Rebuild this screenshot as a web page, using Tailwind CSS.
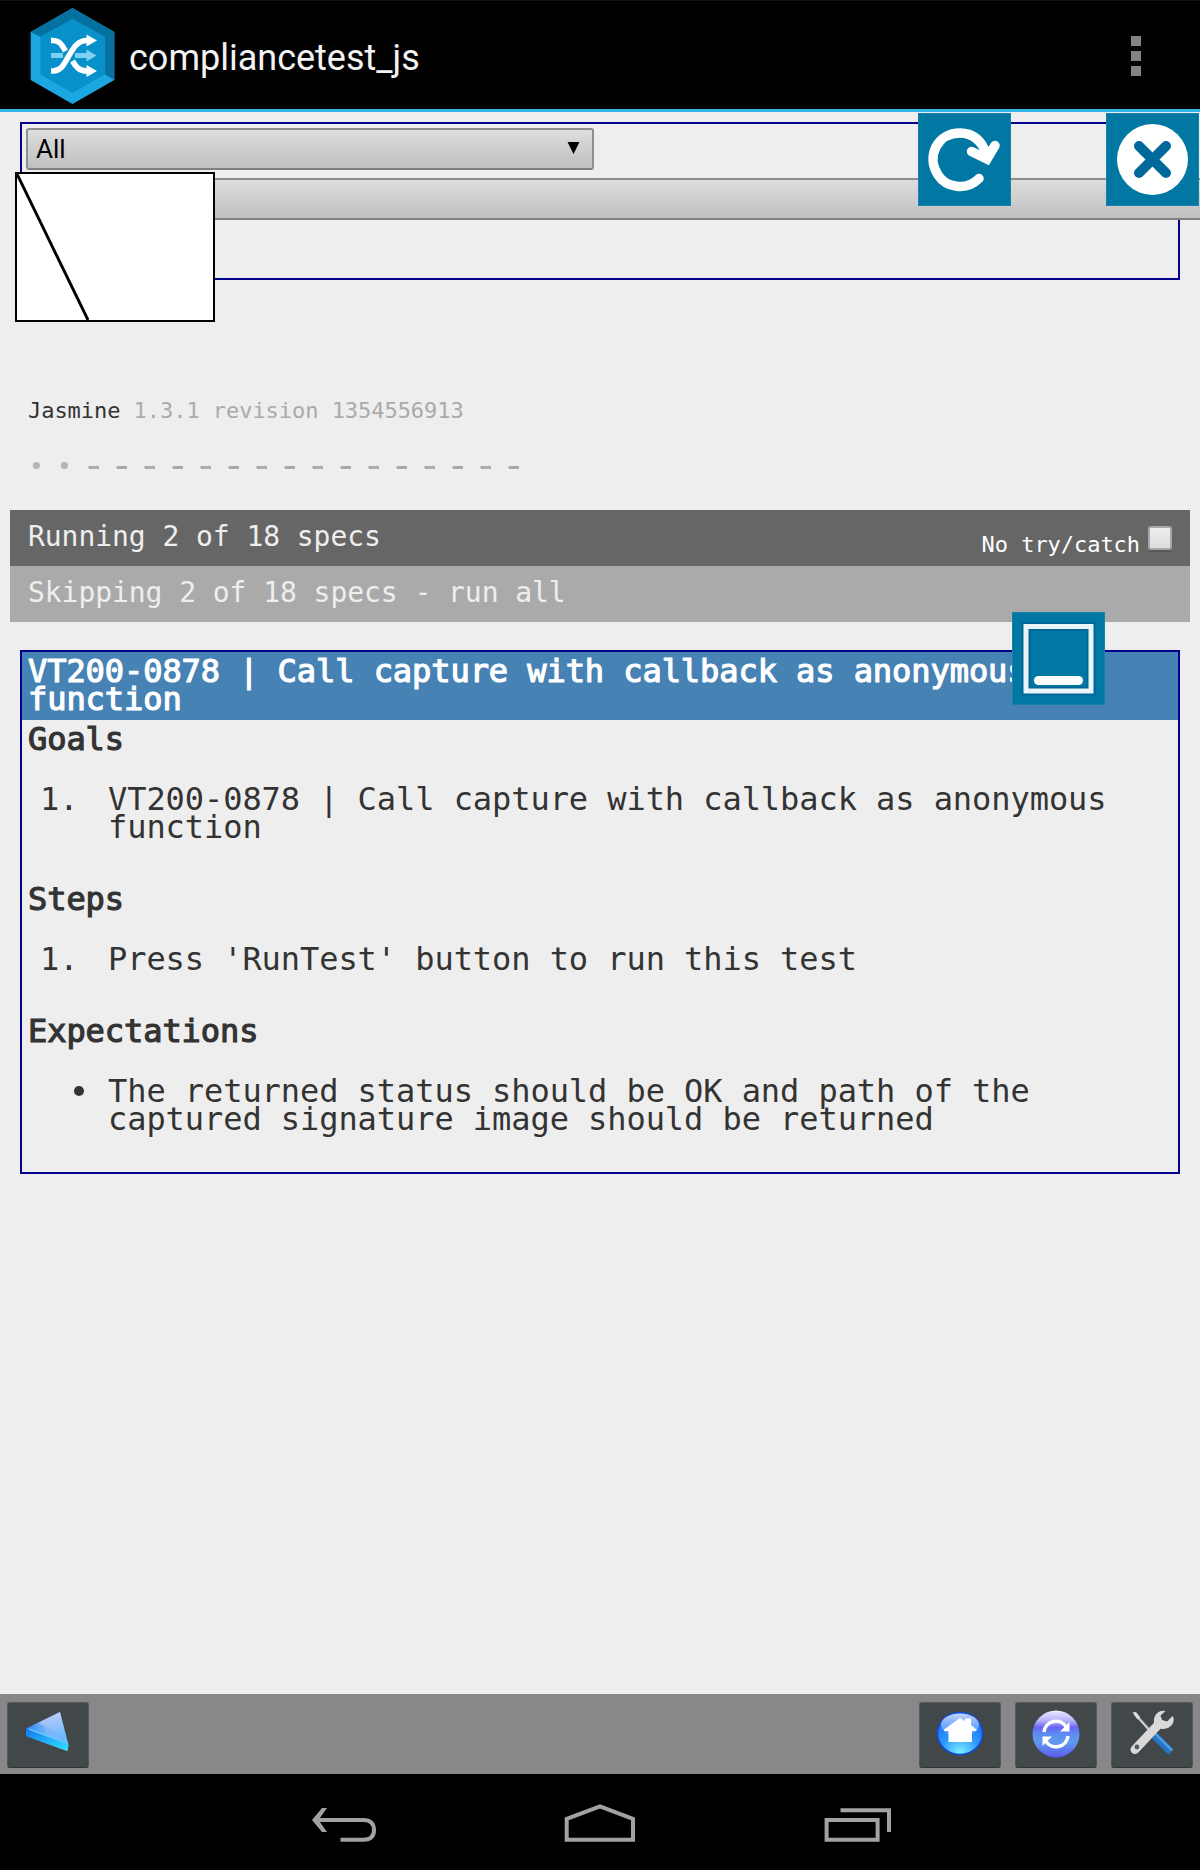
<!DOCTYPE html>
<html lang="en">
<head>
<meta charset="utf-8">
<title>compliancetest_js</title>
<script src="https://cdn.jsdelivr.net/npm/@tailwindcss/browser@4"></script>
</head>
<body class="relative flex flex-col w-[1200px] h-[1870px] overflow-hidden bg-[#eeeeee] text-[#333333] font-['DejaVu_Sans_Mono',monospace]">

<!-- Action bar -->
<header class="flex items-center shrink-0 h-[112px] bg-black border-t border-t-[#111111] border-b-[3px] border-b-[#33b5e5] pl-[30px] pr-[59px]">
  <svg class="w-[85px] h-[97px] mt-[2px]" viewBox="30 8 85 97">
    <path d="M72.500 8L114.300 32V80L72.500 104L30.700 80V32Z" fill="#1ba8e2"/>
    <path d="M30.700 32L72.500 8L114.300 32V80L104.500 74V37L72.500 19L40.500 37Z" fill="#0571a1"/>
    <path d="M72.500 19L104.500 37V74.500L72.500 93L40.500 74.500V37Z" fill="#0890cb"/>
    <path d="M51 55.500H63M75 55.500H87" stroke="#7cd0f2" stroke-width="5"/>
    <path d="M86.500 49.500L96.500 55.500L86.500 61.500Z" fill="#7cd0f2"/>
    <g fill="none" stroke="#fff" stroke-width="5.500">
      <path d="M51 40.500H53C60 40.500 62.500 46 65.500 51"/>
      <path d="M72.500 61C76 67 79 71 87 71"/>
      <path d="M51 71H53C62 71 65 62 69 55.500C73 49 77 40.500 87 40.500"/>
    </g>
    <path d="M86.500 34.500L97 40.500L86.500 46.500ZM86.500 65L97 71L86.500 77Z" fill="#fff"/>
  </svg>
  <h1 class="ml-[14px] mt-[5px] font-['Roboto',sans-serif] text-[36px] leading-[42px] text-[#f3f3f3]">compliancetest_js</h1>
  <div class="ml-auto mt-[2px] flex flex-col gap-[5px]">
    <i class="block size-[10px] bg-[#848484]"></i>
    <i class="block size-[10px] bg-[#848484]"></i>
    <i class="block size-[10px] bg-[#848484]"></i>
  </div>
</header>

<main class="flex flex-col flex-1 px-[10px] pt-[10px]">
  <!-- Test selection -->
  <section class="mx-[10px] h-[158px] shrink-0 border-2 border-[#00008b] pl-1 pt-1">
    <div class="flex items-center justify-between w-[568px] h-[42px] rounded-[3px] border-2 border-[#8e8e8e] border-b-[#808080] bg-linear-to-b from-[#dddddd] to-[#c0c0c0] pl-2 pr-[12px] text-black">
      <span class="font-['Roboto',sans-serif] text-[26px] leading-[30px]">All</span>
      <svg class="w-[13px] h-[12px] -mt-[2px]" viewBox="0 0 13 12"><path d="M0.500 0H12.500L6.500 12Z"/></svg>
    </div>
    <div class="mt-2 w-[1220px] h-[42px] border-2 border-[#8e8e8e] border-b-[#808080] bg-linear-to-b from-[#dddddd] to-[#c0c0c0]"></div>
  </section>

  <!-- Reporter -->
  <div class="mt-[117px] pl-[18px] text-[22px] leading-[28px] tracking-[-0.044px]">Jasmine <span class="text-[#aaaaaa]">1.3.1 revision 1354556913</span></div>
  <div class="mt-[26px] pl-[18px] h-[30px] flex items-center text-[#aaaaaa]">
    <svg class="w-[504px] h-[30px]" viewBox="28 451 504 30" fill="#aaaaaa">
      <circle cx="36.400" cy="465.500" r="3.600" fill="#b5b5b5"/><circle cx="64.400" cy="465.500" r="3.600" fill="#b5b5b5"/>
      <path d="M93.500 467.500H532" stroke="#aaaaaa" stroke-width="3" stroke-dasharray="10.500 17.500" transform="translate(-5 0)"/>
    </svg>
  </div>
  <div class="mt-[29px] flex items-center justify-between h-[56px] bg-[#666666] pl-[18px] pr-[18px] pb-[4px] text-[28px] leading-[40px] tracking-[-0.056px] text-[#eeeeee]">
    <span class="pt-[2px]">Running 2 of 18 specs</span>
    <label class="flex items-center text-[22px] tracking-[-0.044px] text-white">
      <span class="mt-[18px]">No try/catch</span>
      <i class="ml-2 mt-[4px] block size-[24px] rounded-[3px] border-2 border-[#a8a8a8] bg-linear-to-b from-[#eeeeee] to-[#dcdcdc] shadow-[0_2px_1px_#585858]"></i>
    </label>
  </div>
  <div class="flex items-center h-[56px] bg-[#aaaaaa] pl-[18px] pb-[2px] text-[28px] leading-[40px] tracking-[-0.056px] text-[#eeeeee]">Skipping 2 of 18 specs - run all</div>

  <!-- Spec description -->
  <section class="mt-[28px] mx-[10px] h-[524px] border-2 border-[#00008b] text-[32px] leading-[28px] tracking-[-0.064px]">
    <h2 class="h-[68px] bg-[#4682b4] pl-[6px] pt-[5px] [-webkit-text-stroke:1.2px_currentColor] text-white">VT200-0878 | Call capture with callback as anonymous<br>function</h2>
    <div class="pl-[6px] pt-[5px]">
      <h3 class="[-webkit-text-stroke:1.2px_currentColor]">Goals</h3>
      <div class="mt-8 flex"><span class="w-[80px] pl-[12px]">1.</span><p>VT200-0878 | Call capture with callback as anonymous<br>function</p></div>
      <h3 class="mt-[44px] [-webkit-text-stroke:1.2px_currentColor]">Steps</h3>
      <div class="mt-8 flex"><span class="w-[80px] pl-[12px]">1.</span><p>Press 'RunTest' button to run this test</p></div>
      <h3 class="mt-[44px] [-webkit-text-stroke:1.2px_currentColor]">Expectations</h3>
      <div class="mt-8 flex"><span class="w-[80px] pl-[46px] pt-[9px]"><i class="block size-[10px] rounded-full bg-[#333333]"></i></span><p>The returned status should be OK and path of the<br>captured signature image should be returned</p></div>
    </div>
  </section>
</main>

<!-- Browser toolbar -->
<nav class="flex items-center shrink-0 h-[80px] bg-[#888888] px-[7px] pt-[2px]">
  <div class="flex items-center justify-center w-[82px] h-[66px] rounded-[3px] border border-[#565a5c] border-b-[#2f3336] bg-[#42474a]">
    <svg class="w-[80px] h-[64px]" viewBox="8 1703 80 64">
      <defs>
        <linearGradient id="a" x1="0" y1=".6" x2="1" y2=".3"><stop offset="0" stop-color="#147ff0"/><stop offset=".5" stop-color="#7fb8fb"/><stop offset="1" stop-color="#5dbcff"/></linearGradient>
        <linearGradient id="b" x1="0" y1="0" x2="1" y2="1"><stop offset="0" stop-color="#1277ec"/><stop offset="1" stop-color="#2fe4ff"/></linearGradient>
        <linearGradient id="t" x1="0" y1="0" x2="0" y2="1"><stop offset="0" stop-color="#c8cdfa" stop-opacity=".9"/><stop offset="1" stop-color="#c8cdfa" stop-opacity="0"/></linearGradient>
      </defs>
      <path d="M26 1728.500L60 1712L68.500 1745L67 1751L26 1736Z" fill="url(#a)"/>
      <path d="M38 1723L60 1712L66 1737Z" fill="url(#t)"/>
      <path d="M26 1728.500L68.500 1744.500L67.500 1751L26 1736Z" fill="url(#b)"/>
      <path d="M29 1729L68 1743.500" stroke="#64c6ff" stroke-width="1.500"/>
    </svg>
  </div>
  <div class="ml-auto flex gap-[14px]">
    <div class="w-[82px] h-[66px] rounded-[3px] border border-[#565a5c] border-b-[#2f3336] bg-[#42474a]">
      <svg class="w-[80px] h-[64px]" viewBox="920 1703 80 64">
        <defs>
          <radialGradient id="c" cx=".5" cy=".95" r=".9"><stop offset="0" stop-color="#7ff2ff"/><stop offset=".45" stop-color="#2f9cff"/><stop offset="1" stop-color="#1763ef"/></radialGradient>
          <linearGradient id="d" x1="0" y1="0" x2="0" y2="1"><stop offset="0" stop-color="#c2d6ff"/><stop offset="1" stop-color="#6ba6ff" stop-opacity=".5"/></linearGradient>
        </defs>
        <ellipse cx="960" cy="1733.500" rx="22.500" ry="21" fill="url(#c)" stroke="#0f4bdb" stroke-width="1.500"/>
        <ellipse cx="960" cy="1725" rx="19" ry="11.500" fill="url(#d)"/>
        <path d="M944 1729.500L960 1718L965 1721V1718.500H971V1725L976.500 1729.500V1731H972V1742H948.500V1731H944Z" fill="#fff"/>
      </svg>
    </div>
    <div class="w-[82px] h-[66px] rounded-[3px] border border-[#565a5c] border-b-[#2f3336] bg-[#42474a]">
      <svg class="w-[80px] h-[64px]" viewBox="1016 1703 80 64">
        <defs><linearGradient id="e" x1="0" y1="0" x2="0" y2="1"><stop offset="0" stop-color="#ececff"/><stop offset=".22" stop-color="#b3b0fb"/><stop offset=".36" stop-color="#6a63f5"/><stop offset=".5" stop-color="#5d8cf0"/><stop offset=".68" stop-color="#5d9bee"/><stop offset="1" stop-color="#6058ee"/></linearGradient></defs>
        <circle cx="1056" cy="1734" r="23.500" fill="url(#e)"/>
        <g fill="none" stroke="#fff" stroke-width="3.500"><path d="M1044 1732A12 12 0 0 1 1066.500 1727.500"/><path d="M1068 1736A12 12 0 0 1 1045.500 1740.500"/></g>
        <path d="M1069.500 1722V1731.500H1060ZM1042.500 1746V1736.500H1052Z" fill="#fff"/>
      </svg>
    </div>
    <div class="w-[82px] h-[66px] rounded-[3px] border border-[#565a5c] border-b-[#2f3336] bg-[#42474a]">
      <svg class="w-[80px] h-[64px]" viewBox="1112 1703 80 64">
        <path d="M1135 1714L1152 1733" stroke="#cccccc" stroke-width="2.500"/>
        <path d="M1132.500 1712.500L1136 1712L1140 1717L1137.500 1719.500Z" fill="#dedede"/>
        <path d="M1154 1735L1171 1752" stroke="#2674c2" stroke-width="7.500"/>
        <path d="M1155.500 1734L1172 1750.500" stroke="#55a2e2" stroke-width="2"/>
        <path d="M1135 1749.500L1158 1725" stroke="#d9d9d9" stroke-width="9" stroke-linecap="round"/>
        <path d="M1165.500 1711C1157 1709.500 1151.500 1718 1155 1725C1159 1731 1170 1730 1173 1723C1174 1720 1174 1718 1172.500 1716L1167 1721.500L1162 1720L1160.500 1715.500Z" fill="#d9d9d9"/>
        <circle cx="1137" cy="1747" r="2.400" fill="#55595c"/>
      </svg>
    </div>
  </div>
</nav>

<!-- System navigation -->
<footer class="flex shrink-0 h-24 bg-black">
  <svg class="w-full h-full" viewBox="0 1774 1200 96" fill="none" stroke="#a2a2a2" stroke-width="4">
    <path d="M317 1820H363.500C370.500 1820 374 1824 374 1830C374 1836 370.500 1839.700 363.500 1839.700H340.500"/>
    <path d="M322 1808H327L318.500 1820L327 1832H322L312 1820Z" fill="#a2a2a2" stroke="none"/>
    <path d="M566.700 1839.700V1819L600 1806.500L633 1819V1839.700Z"/>
    <path d="M826.600 1820H877.600V1839.700H826.600ZM840.500 1810.200H889V1832"/>
  </svg>
</footer>

<!-- Signature canvas -->
<div class="absolute left-[15px] top-[172px] w-[200px] h-[150px] border-2 border-black bg-white">
  <svg class="w-full h-full" viewBox="0 0 196 146"><path d="M0 0L71 146" stroke="#000" stroke-width="2.900"/></svg>
</div>

<!-- Floating controls -->
<div class="absolute left-[918px] top-[113px] size-[93px] bg-[#0078a3] border border-[#1583a8]">
  <svg class="size-full" viewBox="919 114 91 91" fill="none" stroke="#fff" stroke-width="9.500" stroke-linecap="round" stroke-linejoin="round">
    <path d="M979 178.500C966 191.500 946 187.500 938 175C925.500 155.500 938 133 960 133C973 133 982 141 987 155"/>
    <path d="M971.500 151.500L987 159L995 145.500" stroke-linejoin="miter"/>
  </svg>
</div>
<div class="absolute left-[1106px] top-[113px] size-[93px] bg-[#0078a3] border border-[#1583a8]">
  <svg class="size-full" viewBox="1107 114 91 91">
    <circle cx="1152.500" cy="159.500" r="35.500" fill="#fff"/>
    <path d="M1139 146L1166 173M1166 146L1139 173" stroke="#00699b" stroke-width="10" stroke-linecap="round"/>
  </svg>
</div>
<div class="absolute left-[1012px] top-[612px] size-[93px] bg-[#0078a3] border border-[#1583a8]">
  <svg class="size-full" viewBox="1013 613 91 91">
    <rect x="1026" y="626.500" width="65" height="64.500" fill="#0078a3" stroke="#00669a" stroke-width="9"/>
    <rect x="1026" y="626.500" width="65" height="64.500" fill="none" stroke="#e9f4f8" stroke-width="5"/>
    <path d="M1038.500 680.500H1078.500" stroke="#fff" stroke-width="9" stroke-linecap="round"/>
  </svg>
</div>
</body>
</html>
